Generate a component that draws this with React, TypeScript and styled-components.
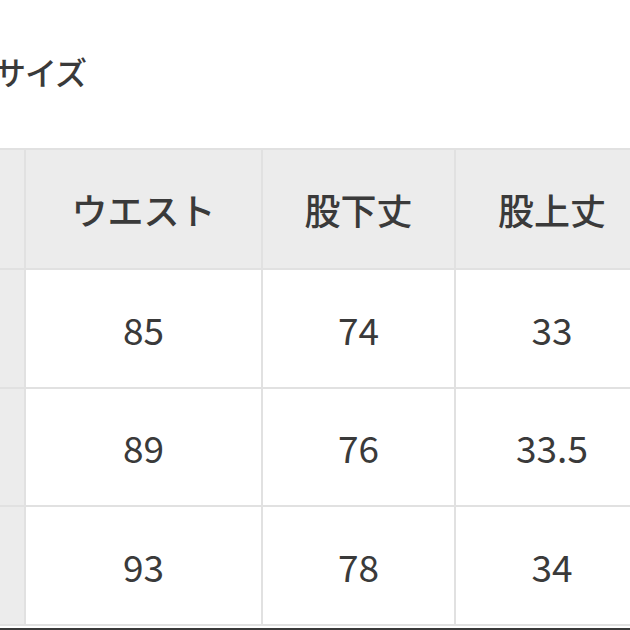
import React from 'react';
import styled, { createGlobalStyle } from 'styled-components';

const GlobalStyle = createGlobalStyle`
  html, body {
    margin: 0;
    padding: 0;
    background: #ffffff;
  }
  body {
    font-family: "Noto Sans CJK JP", "Noto Sans", sans-serif;
    color: #3a3a3a;
    overflow: hidden;
  }
`;

const headers = ['', 'ウエスト', '股下丈', '股上丈'];

const rows: string[][] = [
  ['', '85', '74', '33'],
  ['', '89', '76', '33.5'],
  ['', '93', '78', '34'],
];

const App: React.FC = () => (
  <>
    <GlobalStyle />
    <Page>
      <Title>サイズ</Title>
      <Table>
        {headers.map((h, i) => (
          <HeadCell key={`h${i}`}>{h}</HeadCell>
        ))}
        {rows.map((row, r) =>
          row.map((val, c) =>
            c === 0 ? (
              <LabelCell key={`${r}-${c}`}>{val}</LabelCell>
            ) : (
              <Cell key={`${r}-${c}`}>{val}</Cell>
            )
          )
        )}
      </Table>
      <BottomEdge />
    </Page>
  </>
);

// --- Styled Components ---
const Page = styled.div`
  width: 630px;
  height: 630px;
  overflow: hidden;
  display: flex;
  flex-direction: column;
`;

const Title = styled.h2`
  margin: 55px 0 0 -6px;
  font-size: 32px;
  line-height: 33px;
  font-weight: 500;
  letter-spacing: -1px;
  color: #3a3a3a;
`;

const Table = styled.div`
  margin-top: 60px;
  display: grid;
  grid-template-columns: 24px 235px 191px 192px;
  grid-template-rows: 118px 117px 116px 117px;
  gap: 2px;
  padding: 2px 0;
  width: 648px;
  background: #e1e1e1;
`;

const BaseCell = styled.div`
  display: flex;
  align-items: center;
  justify-content: center;
  white-space: nowrap;
`;

const HeadCell = styled(BaseCell)`
  background: #ececec;
  font-size: 36px;
  font-weight: 500;
  color: #3a3a3a;
`;

const LabelCell = styled(BaseCell)`
  background: #ececec;
`;

const Cell = styled(BaseCell)`
  background: #ffffff;
  font-size: 37px;
  color: #3a3a3a;
`;

const BottomEdge = styled.div`
  margin-top: 2px;
  height: 2px;
  background: #3a3a3a;
`;

export default App;
